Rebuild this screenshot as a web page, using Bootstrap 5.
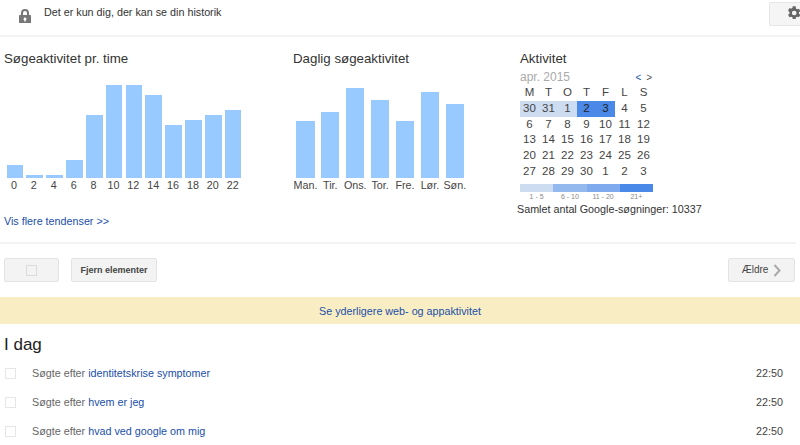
<!DOCTYPE html>
<html lang="da">
<head>
<meta charset="utf-8">
<title>Historik</title>
<link href="https://cdn.jsdelivr.net/npm/bootstrap@5.3.0/dist/css/bootstrap.min.css" rel="stylesheet">
<style>
html,body{height:445px;overflow:hidden}
body{font-family:"Liberation Sans",Arial,sans-serif;font-size:12px;color:#333;background:#fff;line-height:1.2}
a{color:#1a4fa8;text-decoration:none}
.topbar{height:37px;border-bottom:2px solid #f3f3f3;padding:2px 0 0 18px}
.topbar-text{font-size:10.75px;color:#333;margin:4px 0 0 12px}
.lock-ico{margin-top:6px}
.gear-btn{width:31px;height:24px;background:#f5f5f5;border:1px solid #e6e6e6;border-right:0;border-radius:2px 0 0 2px;padding:2px 0 0 16px;overflow:hidden}
.charts{height:207px;border-bottom:2px solid #f3f3f3;margin-right:4px}
.chart-h{font-size:13.3px;color:#333;font-weight:400;line-height:16px;margin:0}
.col-hours{flex:0 0 293px;padding:14px 0 0 4px}
.col-days{flex:0 0 224px;padding:14px 0 0 0}
.col-cal{flex:0 0 auto;padding:14px 0 0 0}
.plot{height:111px;margin-top:0;align-items:flex-end}
.plot-hours{width:239px;padding-left:1px}
.plot-days{width:175px}
.hbar,.dbar{background:#99caff;display:block}
.hcell{width:19.9px;padding:0 1.6px}
.hbar{width:100%}
.dcell{width:24.9px;padding:0 3.4px}
.dbar{width:100%}
.ticks{font-size:10.75px;color:#444;line-height:15px}
.ticks-h span{width:19.9px;text-align:center}
.ticks-d span{width:24.9px;text-align:center;white-space:nowrap}
.more{font-size:10.75px;display:block;margin-top:22px}
.cal-wrap{margin-left:3px;width:134px}
.cal-month{font-size:12px;color:#aaa;height:15px;line-height:15px;margin-top:3px}
.cal-nav{font-size:10px;color:#1a4fa8;margin-right:1px;letter-spacing:1px}
.cal-nav b{font-weight:400;color:#555}
.cal-grid{display:grid;grid-template-columns:repeat(7,19px);grid-auto-rows:15.8px;font-size:11.5px;color:#444;text-align:center;line-height:15.8px;width:133px}
.cal-lo{background:#cddcf0}
.cal-hi{background:#4a89e8;color:#222}
.legend{margin-top:4px;width:133px}
.legend i{display:block;flex:1;height:8px}
.l1{background:#cddcf0}.l2{background:#94b9ef}.l3{background:#7fabee}.l4{background:#4a89e8}
.legend-txt{font-size:7px;color:#888;width:133px;line-height:9px}
.legend-txt span{flex:1;text-align:center}
.total{font-size:10.75px;color:#333;margin:2px 0 0 0;line-height:13px;white-space:nowrap}
.tools{height:53px;padding:14px 4px 0 4px}
.g-btn{background:#f3f3f3;border:1px solid #e3e3e3;border-radius:2px;height:24px;color:#444}
.sel-btn{width:55px}
.sel-box{width:11px;height:11px;border:1px solid #dcdcdc;display:block}
.del-btn{margin-left:12px;width:86px;font-size:9px;font-weight:700;color:#444}
.old-btn{width:67px;font-size:10px;gap:5px;margin-right:1px}
.banner{height:27px;background:#f9eec3;text-align:center;font-size:10.75px;line-height:28px}
.day-h{font-size:17px;font-weight:400;color:#222;margin:10px 0 0 4px;line-height:22px}
.hist-row{height:29px;padding:0 17px 0 5px;font-size:10.75px;color:#666}
.hist-list{margin-top:3px}
.row-box{width:11px;height:11px;border:1px solid #e6e6e6;display:block;margin-right:16px}
.hist-time{color:#444;font-size:10.75px}
</style>
</head>
<body>
<header class="topbar d-flex align-items-start justify-content-between">
  <div class="d-flex align-items-start">
    <svg class="lock-ico" width="14" height="16" viewBox="0 0 14 16"><path fill="#777" fill-rule="evenodd" d="M3 7V5a4 4 0 0 1 8 0v2h1.500a.5.5 0 0 1 .5.5v7a.5.500 0 0 1-.5.5h-11a.5.500 0 0 1-.5-.5v-7a.5.500 0 0 1 .5-.5zm2 0h4V5a2 2 0 0 0-4 0zm2 2.500a1.500 1.500 0 0 0-.7 2.800V13.500h1.400V12.300A1.500 1.500 0 0 0 7 9.500z"/></svg>
    <p class="topbar-text">Det er kun dig, der kan se din historik</p>
  </div>
  <div class="gear-btn">
    <svg width="16" height="16" viewBox="0 0 24 24"><path fill="#666" d="M19.400 13a7.500 7.500 0 0 0 0-2l2.200-1.700-2.200-3.800-2.600 1a7.500 7.500 0 0 0-1.700-1L14.500 2h-4.400l-.5 2.500a7.500 7.500 0 0 0-1.700 1l-2.600-1-2.200 3.800L5.300 11a7.500 7.500 0 0 0 0 2l-2.200 1.700 2.200 3.800 2.600-1a7.500 7.500 0 0 0 1.700 1l.5 2.500h4.400l.5-2.500a7.500 7.500 0 0 0 1.700-1l2.600 1 2.200-3.800zM12.300 15.500a3.500 3.500 0 1 1 0-7 3.500 3.500 0 0 1 0 7z"/></svg>
  </div>
</header>

<section class="charts d-flex">
  <div class="col-hours">
    <h2 class="chart-h">Søgeaktivitet pr. time</h2>
    <div class="plot plot-hours d-flex">
      <div class="hcell"><span class="hbar" style="height:13px"></span></div>
      <div class="hcell"><span class="hbar" style="height:3px"></span></div>
      <div class="hcell"><span class="hbar" style="height:3px"></span></div>
      <div class="hcell"><span class="hbar" style="height:18px"></span></div>
      <div class="hcell"><span class="hbar" style="height:63px"></span></div>
      <div class="hcell"><span class="hbar" style="height:93px"></span></div>
      <div class="hcell"><span class="hbar" style="height:93px"></span></div>
      <div class="hcell"><span class="hbar" style="height:83px"></span></div>
      <div class="hcell"><span class="hbar" style="height:53px"></span></div>
      <div class="hcell"><span class="hbar" style="height:58px"></span></div>
      <div class="hcell"><span class="hbar" style="height:63px"></span></div>
      <div class="hcell"><span class="hbar" style="height:68px"></span></div>
    </div>
    <div class="ticks ticks-h d-flex"><span>0</span><span>2</span><span>4</span><span>6</span><span>8</span><span>10</span><span>12</span><span>14</span><span>16</span><span>18</span><span>20</span><span>22</span></div>
    <a class="more" href="#">Vis flere tendenser &gt;&gt;</a>
  </div>
  <div class="col-days">
    <h2 class="chart-h">Daglig søgeaktivitet</h2>
    <div class="plot plot-days d-flex">
      <div class="dcell"><span class="dbar" style="height:57px"></span></div>
      <div class="dcell"><span class="dbar" style="height:66px"></span></div>
      <div class="dcell"><span class="dbar" style="height:90px"></span></div>
      <div class="dcell"><span class="dbar" style="height:78px"></span></div>
      <div class="dcell"><span class="dbar" style="height:57px"></span></div>
      <div class="dcell"><span class="dbar" style="height:86px"></span></div>
      <div class="dcell"><span class="dbar" style="height:74px"></span></div>
    </div>
    <div class="ticks ticks-d d-flex"><span>Man.</span><span>Tir.</span><span>Ons.</span><span>Tor.</span><span>Fre.</span><span>Lør.</span><span>Søn.</span></div>
  </div>
  <div class="col-cal">
    <div class="cal-wrap">
      <h2 class="chart-h">Aktivitet</h2>
      <div class="cal-month d-flex justify-content-between"><span>apr. 2015</span><span class="cal-nav">&lt; <b>&gt;</b></span></div>
      <div class="cal-grid">
        <span>M</span><span>T</span><span>O</span><span>T</span><span>F</span><span>L</span><span>S</span>
        <span class="cal-lo">30</span><span class="cal-lo">31</span><span class="cal-lo">1</span><span class="cal-hi">2</span><span class="cal-hi">3</span><span>4</span><span>5</span>
        <span>6</span><span>7</span><span>8</span><span>9</span><span>10</span><span>11</span><span>12</span>
        <span>13</span><span>14</span><span>15</span><span>16</span><span>17</span><span>18</span><span>19</span>
        <span>20</span><span>21</span><span>22</span><span>23</span><span>24</span><span>25</span><span>26</span>
        <span>27</span><span>28</span><span>29</span><span>30</span><span>1</span><span>2</span><span>3</span>
      </div>
      <div class="legend d-flex"><i class="l1"></i><i class="l2"></i><i class="l3"></i><i class="l4"></i></div>
      <div class="legend-txt d-flex"><span>1 - 5</span><span>6 - 10</span><span>11 - 20</span><span>21+</span></div>
    </div>
    <p class="total">Samlet antal Google-søgninger: 10337</p>
  </div>
</section>

<div class="tools d-flex align-items-start">
  <div class="g-btn sel-btn d-flex align-items-center justify-content-center"><span class="sel-box"></span></div>
  <div class="g-btn del-btn d-flex align-items-center justify-content-center">Fjern elementer</div>
  <div class="g-btn old-btn ms-auto d-flex align-items-center justify-content-center">Ældre
    <svg width="8" height="13" viewBox="0 0 8 13"><path fill="none" stroke="#aaa" stroke-width="2" d="M1.500 1l5 5.500-5 5.500"/></svg>
  </div>
</div>

<div class="banner"><a href="#">Se yderligere web- og appaktivitet</a></div>

<h2 class="day-h">I dag</h2>
<div class="hist-list">
  <div class="hist-row d-flex align-items-center"><span class="row-box"></span><span>Søgte efter <a href="#">identitetskrise symptomer</a></span><span class="hist-time ms-auto">22:50</span></div>
  <div class="hist-row d-flex align-items-center"><span class="row-box"></span><span>Søgte efter <a href="#">hvem er jeg</a></span><span class="hist-time ms-auto">22:50</span></div>
  <div class="hist-row d-flex align-items-center"><span class="row-box"></span><span>Søgte efter <a href="#">hvad ved google om mig</a></span><span class="hist-time ms-auto">22:50</span></div>
</div>
<script src="https://cdn.jsdelivr.net/npm/bootstrap@5.3.0/dist/js/bootstrap.bundle.min.js"></script>
</body>
</html>
